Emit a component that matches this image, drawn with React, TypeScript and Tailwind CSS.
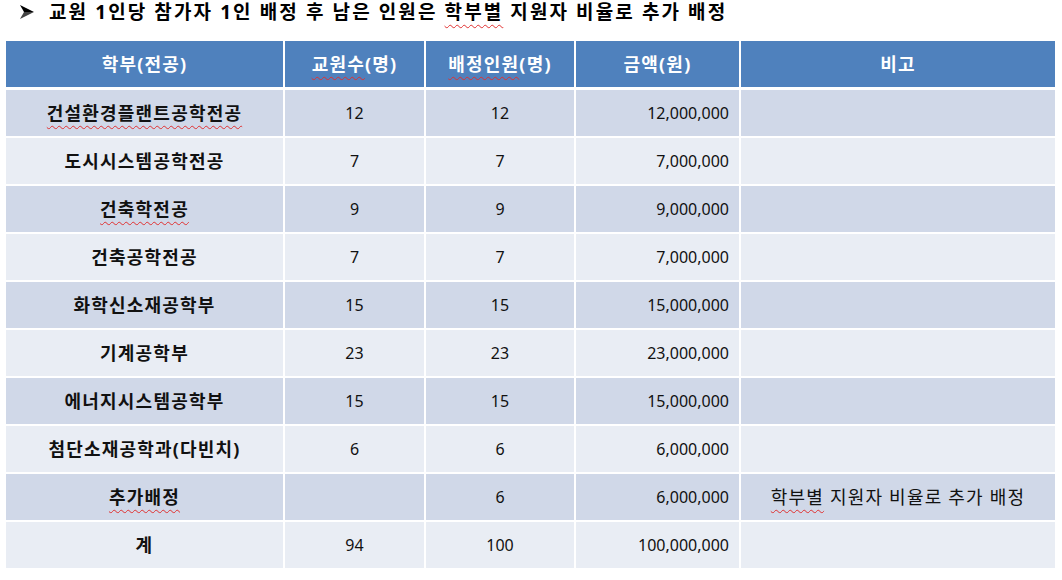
import React from "react";

const rows = [
  { name: "건설환경플랜트공학전공", wavy: true, staff: "12", assigned: "12", amount: "12,000,000", note: "" },
  { name: "도시시스템공학전공", staff: "7", assigned: "7", amount: "7,000,000", note: "" },
  { name: "건축학전공", wavy: true, staff: "9", assigned: "9", amount: "9,000,000", note: "" },
  { name: "건축공학전공", staff: "7", assigned: "7", amount: "7,000,000", note: "" },
  { name: "화학신소재공학부", staff: "15", assigned: "15", amount: "15,000,000", note: "" },
  { name: "기계공학부", staff: "23", assigned: "23", amount: "23,000,000", note: "" },
  { name: "에너지시스템공학부", staff: "15", assigned: "15", amount: "15,000,000", note: "" },
  { name: "첨단소재공학과(다빈치)", staff: "6", assigned: "6", amount: "6,000,000", note: "" },
  { name: "추가배정", wavy: true, staff: "", assigned: "6", amount: "6,000,000", note: "extra" },
  { name: "계", staff: "94", assigned: "100", amount: "100,000,000", note: "" },
];

const wavy = "underline decoration-wavy decoration-[#e03030] decoration-1 underline-offset-[5px]";
const cols = "grid grid-cols-[277px_139px_148px_163px_314px] gap-x-[2px]";
const ko = "text-[18px] tracking-[1.2px]";
const head = `bg-[#4f81bd] text-white font-bold ${ko} flex items-center justify-center`;

const App = () => {
  return (
    <div
      className="w-[1062px] h-[580px] bg-white text-black overflow-hidden"
      style={{ fontFamily: '"Noto Sans", "Noto Sans CJK KR", sans-serif' }}
    >
      <div className="flex items-center h-[24px] pl-[20px]">
        <svg width="14" height="14" viewBox="0 0 14 14" className="mr-[15px]">
          <path d="M0 0 L14 7 L4 7 Z" fill="#000" />
          <path d="M0 14 L14 7 L4 7 Z" fill="#444" />
        </svg>
        <span className="text-[19px] font-bold tracking-[2.1px]">
          교원 1인당 참가자 1인 배정 후 남은 인원은 <span className={wavy}>학부별</span> 지원자 비율로 추가 배정
        </span>
      </div>

      <div className="ml-[6px] mt-[17px] w-[1049px]">
        <div className={`${cols} h-[46px] mb-[3px]`}>
          <div className={head}>학부(전공)</div>
          <div className={head}>
            <span className={wavy}>교원수</span>(명)
          </div>
          <div className={head}>
            <span className={wavy}>배정인원</span>(명)
          </div>
          <div className={head}>금액(원)</div>
          <div className={head}>비고</div>
        </div>

        <div className="flex flex-col gap-y-[2px]">
          {rows.map((r, i) => {
            const bg = i % 2 === 0 ? "bg-[#d0d8e8]" : "bg-[#e9edf4]";
            return (
              <div key={r.name} className={`${cols} h-[46px] text-[16px] text-[#111]`}>
                <div className={`${bg} flex items-center justify-center font-bold ${ko}`}>
                  <span className={r.wavy ? wavy : ""}>{r.name}</span>
                </div>
                <div className={`${bg} flex items-center justify-center`}>{r.staff}</div>
                <div className={`${bg} flex items-center justify-center`}>{r.assigned}</div>
                <div className={`${bg} flex items-center justify-end pr-[10px]`}>{r.amount}</div>
                <div className={`${bg} flex items-center justify-center ${ko}`}>
                  {r.note && (
                    <span>
                      <span className={wavy}>학부별</span> 지원자 비율로 추가 배정
                    </span>
                  )}
                </div>
              </div>
            );
          })}
        </div>
      </div>
    </div>
  );
};

export default App;
